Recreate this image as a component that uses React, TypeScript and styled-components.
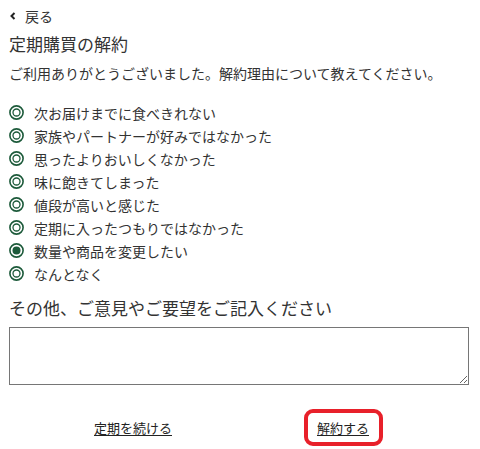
import React, { useState } from 'react'
import styled, { createGlobalStyle } from 'styled-components'

const GlobalStyle = createGlobalStyle`
  html, body {
    margin: 0;
    padding: 0;
    background: #fff;
  }
  body {
    font-family: "Noto Sans CJK JP", "Noto Sans", sans-serif;
    color: #333;
  }
`

const reasons = [
  '次お届けまでに食べきれない',
  '家族やパートナーが好みではなかった',
  '思ったよりおいしくなかった',
  '味に飽きてしまった',
  '値段が高いと感じた',
  '定期に入ったつもりではなかった',
  '数量や商品を変更したい',
  'なんとなく',
]

const RadioMark: React.FC<{ checked: boolean }> = ({ checked }) => (
  <StyledRadioSvg width="15" height="15" viewBox="0 0 15 15">
    <circle cx="7.5" cy="7.5" r="6.6" fill="none" stroke="#1c5a3a" strokeWidth="1.6" />
    {checked ? (
      <circle cx="7.5" cy="7.5" r="4" fill="#1c5a3a" />
    ) : (
      <circle cx="7.5" cy="7.5" r="3.5" fill="none" stroke="#1c5a3a" strokeWidth="1.3" />
    )}
  </StyledRadioSvg>
)

const App: React.FC = () => {
  const [selected, setSelected] = useState(6)
  const [note, setNote] = useState('')

  return (
    <StyledPage>
      <GlobalStyle />
      <StyledBack href="#">
        <svg width="6" height="8" viewBox="0 0 6 8">
          <polyline points="4.5,1 1.5,4 4.5,7" fill="none" stroke="#222" strokeWidth="2" />
        </svg>
        <span>戻る</span>
      </StyledBack>

      <StyledTitle>定期購買の解約</StyledTitle>
      <StyledLead>ご利用ありがとうございました。解約理由について教えてください。</StyledLead>

      <StyledReasonList>
        {reasons.map((text, i) => (
          <StyledReason key={text} onClick={() => setSelected(i)}>
            <RadioMark checked={selected === i} />
            <span>{text}</span>
          </StyledReason>
        ))}
      </StyledReasonList>

      <StyledNoteLabel>その他、ご意見やご要望をご記入ください</StyledNoteLabel>
      <StyledTextarea value={note} onChange={e => setNote(e.target.value)} />

      <StyledActions>
        <StyledActionCell>
          <StyledLink href="#">定期を続ける</StyledLink>
        </StyledActionCell>
        <StyledActionCell>
          <StyledHighlight>
            <StyledLink href="#">解約する</StyledLink>
          </StyledHighlight>
        </StyledActionCell>
      </StyledActions>
    </StyledPage>
  )
}

const StyledPage = styled.div`
  width: 480px;
  box-sizing: border-box;
  padding: 0 11px 0 9px;
`

const StyledBack = styled.a`
  display: flex;
  align-items: center;
  gap: 9px;
  height: 32px;
  padding-left: 1px;
  font-size: 14px;
  color: #333;
  text-decoration: none;
`

const StyledTitle = styled.h1`
  margin: 0;
  font-size: 17px;
  font-weight: 400;
  line-height: 24px;
`

const StyledLead = styled.p`
  margin: 7px 0 0;
  font-size: 14px;
  line-height: 20px;
  white-space: nowrap;
`

const StyledReasonList = styled.div`
  margin-top: 18px;
  display: flex;
  flex-direction: column;
`

const StyledReason = styled.label`
  display: flex;
  align-items: center;
  gap: 10px;
  height: 23px;
  font-size: 14px;
  cursor: pointer;
`

const StyledRadioSvg = styled.svg`
  flex: none;
  margin-left: 0;
`

const StyledNoteLabel = styled.div`
  margin-top: 10px;
  font-size: 17px;
  line-height: 26px;
`

const StyledTextarea = styled.textarea`
  display: block;
  box-sizing: border-box;
  width: 460px;
  height: 58px;
  margin-top: 6px;
  border: 1px solid #767676;
  resize: both;
  font-family: inherit;
`

const StyledActions = styled.div`
  display: grid;
  grid-template-columns: 210px 210px;
  padding-left: 19px;
  margin-top: 24px;
`

const StyledActionCell = styled.div`
  display: flex;
  justify-content: center;
  align-items: center;
  height: 37px;
`

const StyledHighlight = styled.div`
  display: flex;
  align-items: center;
  justify-content: center;
  box-sizing: border-box;
  width: 79px;
  height: 37px;
  border: 4px solid #e8202a;
  border-radius: 9px;
`

const StyledLink = styled.a`
  font-size: 13px;
  line-height: 18px;
  color: #222;
  text-decoration: underline;
  text-underline-offset: 2px;
`

export default App
